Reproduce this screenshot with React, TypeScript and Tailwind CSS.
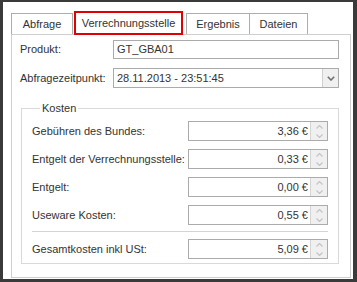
import React from "react";

const COSTS = [
  { label: "Gebühren des Bundes:", value: "3,36 €" },
  { label: "Entgelt der Verrechnungsstelle:", value: "0,33 €" },
  { label: "Entgelt:", value: "0,00 €" },
  { label: "Useware Kosten:", value: "0,55 €" },
];

function Spinner() {
  return (
    <div className="flex flex-col w-[17px] h-full border-l border-[#d4d4d4] bg-[#f0f0f0]">
      <div className="flex-1 flex items-center justify-center">
        <svg width="7" height="4" viewBox="0 0 7 4">
          <path d="M0.5 3.5 L3.5 0.5 L6.5 3.5" fill="none" stroke="#c4c4c4" strokeWidth="1.2" />
        </svg>
      </div>
      <div className="flex-1 flex items-center justify-center">
        <svg width="7" height="4" viewBox="0 0 7 4">
          <path d="M0.5 0.5 L3.5 3.5 L6.5 0.5" fill="none" stroke="#c4c4c4" strokeWidth="1.2" />
        </svg>
      </div>
    </div>
  );
}

function MoneyField({ value }: { value: string }) {
  return (
    <div className="flex w-[140px] h-[20px] border border-[#ababab] bg-white">
      <div className="flex-1 flex items-center justify-end pr-[2px]">{value}</div>
      <Spinner />
    </div>
  );
}

export default function App() {
  return (
    <div className="w-[357px] h-[282px] bg-white border-l-[3px] border-t-[2px] border-r-[4px] border-b-[3px] border-[#3a3a3a] pl-[8px] pt-[9px] font-['Liberation_Sans',Arial,sans-serif] text-[11px] text-[#333]">
      {/* Tabs */}
      <div className="flex items-end h-[23px]">
        <div className="w-[62px] h-[21px] border border-b-0 border-[#adadad] flex items-center justify-center">
          Abfrage
        </div>
        <div className="relative z-10 ml-[1px] -mb-px w-[109px] h-[24px] border-2 border-[#e00000] bg-white flex items-center justify-center">
          Verrechnungsstelle
        </div>
        <div className="ml-[3px] w-[64px] h-[21px] border border-b-0 border-[#adadad] flex items-center justify-center">
          Ergebnis
        </div>
        <div className="-ml-px w-[59px] h-[21px] border border-b-0 border-[#adadad] flex items-center justify-center">
          Dateien
        </div>
      </div>

      {/* Panel */}
      <div className="w-[340px] h-[244px] border border-[#cfcfcf] bg-white pl-[8px] pt-[5px]">
        <div className="flex items-center">
          <div className="w-[93px]">Produkt:</div>
          <div className="w-[226px] h-[19px] border border-[#ababab] pl-[3px] flex items-center">GT_GBA01</div>
        </div>
        <div className="flex items-center mt-[9px]">
          <div className="w-[93px]">Abfragezeitpunkt:</div>
          <div className="w-[226px] h-[20px] border border-[#ababab] flex">
            <div className="flex-1 pl-[3px] flex items-center">28.11.2013 - 23:51:45</div>
            <div className="w-[16px] border-l border-[#cfcfcf] bg-[#f0f0f0] flex items-center justify-center">
              <svg width="8" height="5" viewBox="0 0 8 5">
                <path d="M0.8 0.8 L4 4 L7.2 0.8" fill="none" stroke="#707070" strokeWidth="1.6" />
              </svg>
            </div>
          </div>
        </div>

        {/* Kosten group */}
        <fieldset className="mt-[14px] ml-[1px] w-[318px] border border-[#d9d9d9] pl-[10px] pb-[4px]">
          <legend className="ml-[8px] px-[2px] leading-[13px]">Kosten</legend>
          <div className="flex flex-col gap-[8px] mt-[6px]">
            {COSTS.map((c) => (
              <div key={c.label} className="flex items-center">
                <div className="w-[156px]">{c.label}</div>
                <MoneyField value={c.value} />
              </div>
            ))}
          </div>
          <div className="mt-[6px] w-[296px] h-px bg-[#d4d4d4]" />
          <div className="flex items-center mt-[7px]">
            <div className="w-[156px]">Gesamtkosten inkl USt:</div>
            <MoneyField value="5,09 €" />
          </div>
        </fieldset>
      </div>
    </div>
  );
}
